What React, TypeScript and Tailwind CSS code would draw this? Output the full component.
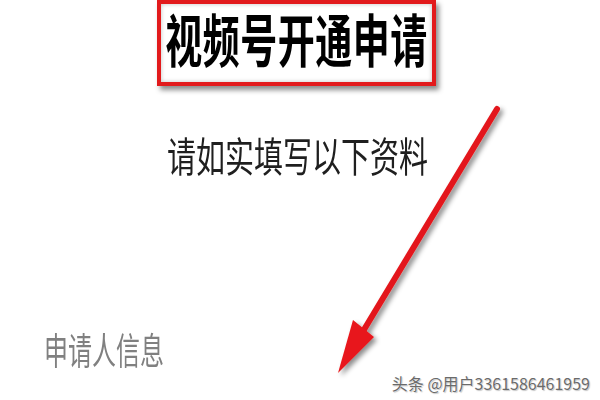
const cjk = { fontFamily: '"Noto Sans CJK SC", "Noto Sans", sans-serif' }

function Arrow() {
  return (
    <svg
      className="absolute inset-0 pointer-events-none"
      width={600}
      height={400}
      viewBox="0 0 600 400"
    >
      <defs>
        <filter id="shadow" x="-20%" y="-20%" width="140%" height="140%">
          <feDropShadow dx="3" dy="3" stdDeviation="2.5" floodColor="#000" floodOpacity="0.45" />
        </filter>
      </defs>
      <g filter="url(#shadow)">
        <line x1={497} y1={109} x2={362} y2={333} stroke="#e3191b" strokeWidth={6} strokeLinecap="round" />
        <polygon points="338,373 353,320 374,337" fill="#e8161a" />
      </g>
    </svg>
  )
}

export default function App() {
  return (
    <div className="relative w-[600px] h-[400px] overflow-hidden bg-white" style={cjk}>
      <div className="flex flex-col">
        <div className="ml-[157px] w-[279px] h-[86px] border-[4px] border-[#e21a1c] bg-white shadow-[3px_4px_5px_rgba(0,0,0,0.45),inset_0_0_4px_rgba(0,0,0,0.25)] flex items-start justify-center pt-[13px]">
          <span className="block text-[37px] leading-[1.1] font-bold text-black tracking-[0.5px] scale-y-[1.55]">
            视频号开通申请
          </span>
        </div>
        <div className="mt-[51px] pl-[167px] h-[34px] flex items-center">
          <span className="text-[29px] leading-none font-normal text-[#1f1f1f] scale-y-[1.4]">
            请如实填写以下资料
          </span>
        </div>
        <div className="mt-[164px] pl-[44px] h-[30px] flex items-center">
          <span className="text-[24px] leading-none font-normal text-[#808080] scale-y-[1.55]">
            申请人信息
          </span>
        </div>
      </div>
      <Arrow />
      <div className="absolute right-[10px] bottom-[9px] text-[16px] leading-none text-[#6a6a6a] [text-shadow:0_0_1px_#fff,1px_1px_1px_rgba(0,0,0,0.25)]">
        头条 @用户3361586461959
      </div>
    </div>
  )
}
